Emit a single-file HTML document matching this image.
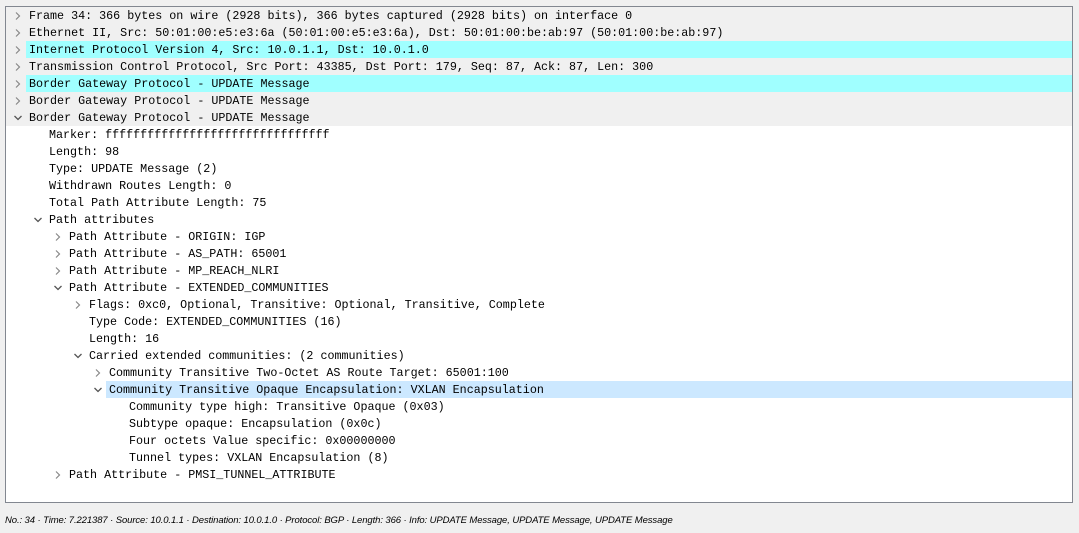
<!DOCTYPE html>
<html><head><style>
body{margin:0;width:1079px;height:533px;background:#f0f0f0;position:relative;overflow:hidden}
#p{position:absolute;left:5px;top:6px;width:1066px;height:495px;border:1px solid #828790;background:#fff;overflow:hidden}
.r{position:absolute;left:0;width:1066px;height:17px;font:11.7px/17px "Liberation Mono",monospace;color:#000;white-space:pre}
.t{position:absolute;top:1px}
.a{position:absolute;top:1px;width:10px;height:17px}
.hl{position:absolute;top:0;height:17px;right:0}
</style></head><body>
<div id="p"><div style="position:absolute;left:0;top:0;width:1066px;height:119px;background:#f0f0f0"></div></div>
<script>
const rows=[
[0,1,"Frame 34: 366 bytes on wire (2928 bits), 366 bytes captured (2928 bits) on interface 0"],
[0,1,"Ethernet II, Src: 50:01:00:e5:e3:6a (50:01:00:e5:e3:6a), Dst: 50:01:00:be:ab:97 (50:01:00:be:ab:97)"],
[0,1,"Internet Protocol Version 4, Src: 10.0.1.1, Dst: 10.0.1.0","#a0ffff"],
[0,1,"Transmission Control Protocol, Src Port: 43385, Dst Port: 179, Seq: 87, Ack: 87, Len: 300"],
[0,1,"Border Gateway Protocol - UPDATE Message","#a0ffff"],
[0,1,"Border Gateway Protocol - UPDATE Message"],
[0,2,"Border Gateway Protocol - UPDATE Message"],
[1,0,"Marker: ffffffffffffffffffffffffffffffff"],
[1,0,"Length: 98"],
[1,0,"Type: UPDATE Message (2)"],
[1,0,"Withdrawn Routes Length: 0"],
[1,0,"Total Path Attribute Length: 75"],
[1,2,"Path attributes"],
[2,1,"Path Attribute - ORIGIN: IGP"],
[2,1,"Path Attribute - AS_PATH: 65001"],
[2,1,"Path Attribute - MP_REACH_NLRI"],
[2,2,"Path Attribute - EXTENDED_COMMUNITIES"],
[3,1,"Flags: 0xc0, Optional, Transitive: Optional, Transitive, Complete"],
[3,0,"Type Code: EXTENDED_COMMUNITIES (16)"],
[3,0,"Length: 16"],
[3,2,"Carried extended communities: (2 communities)"],
[4,1,"Community Transitive Two-Octet AS Route Target: 65001:100"],
[4,2,"Community Transitive Opaque Encapsulation: VXLAN Encapsulation","#cce8ff"],
[5,0,"Community type high: Transitive Opaque (0x03)"],
[5,0,"Subtype opaque: Encapsulation (0x0c)"],
[5,0,"Four octets Value specific: 0x00000000"],
[5,0,"Tunnel types: VXLAN Encapsulation (8)"],
[2,1,"Path Attribute - PMSI_TUNNEL_ATTRIBUTE"]];
const p=document.getElementById('p');let h='';
rows.forEach((r,i)=>{const x=23+20*r[0];let s=`<div class="r" style="top:${17*i}px">`;
if(r[3])s+=`<div class="hl" style="left:${x-3}px;background:${r[3]}"></div>`;
if(r[1]==1)s+=`<svg class="a" style="left:${x-16}px" viewBox="0 0 10 17"><path d="M3 4.5L6.5 8L3 11.5" fill="none" stroke="#888" stroke-width="1.2"/></svg>`;
if(r[1]==2)s+=`<svg class="a" style="left:${x-16}px" viewBox="0 0 10 17"><path d="M1.5 6L5 9.5L8.5 6" fill="none" stroke="#555" stroke-width="1.3"/></svg>`;
s+=`<span class="t" style="left:${x}px">${r[2]}</span></div>`;h+=s;});
p.insertAdjacentHTML('beforeend',h);
</script>
<div style="position:absolute;left:5px;top:514px;font:italic 9.5px/14px 'Liberation Sans',sans-serif;color:#000;white-space:pre;letter-spacing:-0.1px">No.: 34 · Time: 7.221387 · Source: 10.0.1.1 · Destination: 10.0.1.0 · Protocol: BGP · Length: 366 · Info: UPDATE Message, UPDATE Message, UPDATE Message</div>
</body></html>
